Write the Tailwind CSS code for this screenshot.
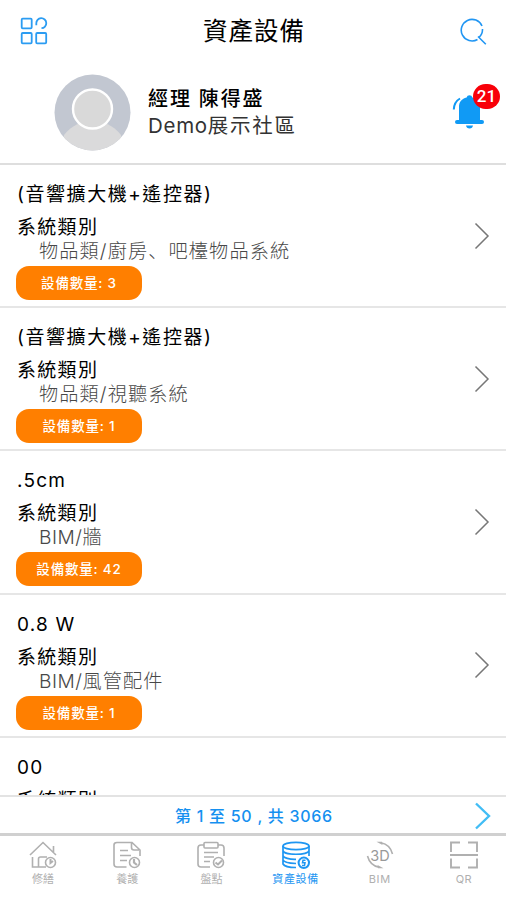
<!DOCTYPE html>
<html lang="zh-Hant">
<head>
<meta charset="utf-8">
<title>資產設備</title>
<script src="https://cdn.jsdelivr.net/npm/@tailwindcss/browser@4"></script>
</head>
<body class="bg-white">
<div class="w-[506px] h-[900px] overflow-hidden flex flex-col bg-white text-black font-['Inter','Noto_Sans_CJK_TC',sans-serif]">
  <header class="h-[165px] shrink-0 border-b-2 border-[#dedede]">
    <div class="h-[62px] flex items-center justify-between pl-5 pr-[18px]">
      <svg class="w-7 h-7" viewBox="0 0 28 28" fill="none" stroke="#2b9cf2" stroke-width="1.8"><rect x="1.7" y="1.7" width="10" height="9.6" rx="1"/><rect x="1.7" y="16" width="10" height="10.3" rx="1"/><rect x="16.2" y="16" width="10" height="10.3" rx="1"/><path d="M16.3 8.2V6.5A5 5 0 1 1 21.5 11.2"/></svg>
      <h1 class="text-[24.5px] leading-8 tracking-[1px] -mt-[2px] font-['Noto_Sans_CJK_TC',sans-serif]">資產設備</h1>
      <svg class="w-7 h-7" viewBox="0 0 28 28" fill="none" stroke="#2196f3" stroke-width="1.6"><path d="M22 9A10.800 10.800 0 1 0 17.500 22.500M22.500 12A10.800 10.800 0 0 1 19 20.300M18 19.500 25.800 27.200"/></svg>
    </div>
    <div class="h-[101px] flex pl-[54px] pr-[10px]">
      <svg class="w-[77px] h-[77px] mt-3 shrink-0" viewBox="0 0 77 77"><defs><clipPath id="c"><circle cx="38.5" cy="38.5" r="38"/></clipPath></defs><g clip-path="url(#c)"><rect width="77" height="77" fill="#c2c7d1"/><path d="M10 61C18 51 28 47 38.500 47S59 51 67 61V77H10Z" fill="#dadadb"/></g><circle cx="38.5" cy="35" r="19.5" fill="#d9d9d9" stroke="#fff" stroke-width="2.4"/></svg>
      <div class="ml-[17px] mt-6 grow">
        <div class="h-[26px] leading-[27px] text-[20px] tracking-[1.900px] font-medium"><span>經理</span><span class="inline-block w-[7px]"></span><span>陳得盛</span></div>
        <div class="h-[27px] leading-[27px] text-[20.500px] text-[#333]"><span class="tracking-[0.700px]">Demo</span><span class="tracking-[1.700px]">展示社區</span></div>
      </div>
      <div class="relative w-[50px] h-[50px] mt-[20px]">
        <svg class="w-[50px] h-[50px]" viewBox="0 0 50 50" fill="#109af5"><path d="M20.600 15.500a3 3 0 0 1 5.800 0C31.200 16.500 34 20 34 25V38H13V25C13 20 15.800 16.500 20.600 15.500Z"/><rect x="9" y="38" width="29" height="4" rx="2"/><path d="M20 43.500H27Q26.500 46.500 23.500 46.500T20 43.500Z"/><path d="M7.800 27.500Q8 20 14 16.500" fill="none" stroke="#109af5" stroke-width="2"/></svg>
        <span class="absolute left-[27px] top-[2px] w-[27px] h-[25px] rounded-full bg-[#f80009] text-white text-[17px] leading-[25px] text-center font-medium font-['Roboto',sans-serif]">21</span>
      </div>
    </div>
  </header>
  <main id="list" class="h-[630px] shrink-0 overflow-hidden"></main>
  <div class="h-[41px] shrink-0 border-t-2 border-[#e3e3e3] flex items-center pl-[175px] pr-[15px] pb-[2px] justify-between text-[#1590f0]">
    <span class="text-[16px] leading-5 tracking-[0.720px] font-medium whitespace-nowrap">第 1 至 50 , 共 3066</span>
    <svg class="w-4 h-7" viewBox="0 0 16 28" fill="none" stroke="#42bdf5" stroke-width="2.400"><path d="M1 1.500 14 14 1 26.500"/></svg>
  </div>
  <nav class="h-[67px] shrink-0 border-t-[3px] border-[#d0d0d0] -mt-[3px] grid grid-cols-6 text-[#b0b0b0] text-[11px] leading-4 pt-[5px] pl-px text-center">
    <div class="flex flex-col items-center gap-[2px]"><svg class="w-7 h-7" viewBox="0 0 28 28" fill="none" stroke="currentColor" stroke-width="1.6"><path d="M1 14 14 1.500 27 14M24.500 5V11M3.500 16V26H9.500V18Q9.500 16 11.500 16H18M9.500 26H17"/><circle cx="21.500" cy="21.500" r="5"/><path d="M21.500 18V22L24 20" stroke-width="2"/></svg><span>修繕</span></div>
    <div class="flex flex-col items-center gap-[2px]"><svg class="w-7 h-7" viewBox="0 0 28 28" fill="none" stroke="currentColor" stroke-width="1.600"><path d="M13.500 26H4Q1 26 1 23V4Q1 1.500 4 1.500H19L27 9V15M18.500 2V6.500Q18.500 9 21 9H26M7 9.500H15M7 14.500H18M7 19.500H14"/><circle cx="21.500" cy="21.500" r="5"/><path d="M21 18V21.500L24 24" stroke-width="2.200"/></svg><span>養護</span></div>
    <div class="flex flex-col items-center gap-[2px]"><svg class="w-7 h-7" viewBox="0 0 28 28" fill="none" stroke="currentColor" stroke-width="1.600"><path d="M13 26H4Q1 26 1 23V7Q1 4 4 4H7M21 4H24Q27 4 27 7V15M7 11.500H21M7 16H17M7 20.500H13"/><rect x="7" y="1.500" width="14" height="5.500" rx="1"/><circle cx="21.500" cy="21.500" r="5"/><path d="M18.500 21.500 21 23.500 25 19.500" stroke-width="2"/></svg><span>盤點</span></div>
    <div class="flex flex-col items-center gap-[2px] text-[#1e96f2]"><svg class="w-7 h-7" viewBox="0 0 28 28" fill="none" stroke="currentColor" stroke-width="1.700"><ellipse cx="14" cy="5" rx="13" ry="3.700"/><path d="M1 5V9.500C1 14.500 27 14.500 27 9.500V5M1 9.500V14.500C1 17 8 18.500 14 18.300M27 9.500V15M1 14.500V19Q2 22 14 22.500M1 19V23Q3 26.500 14 26.500"/><circle cx="21.800" cy="21.800" r="5.200" stroke-width="2"/><path d="M23.500 19.200H21L20.500 21.800H23L22.500 24.500H20" stroke-width="1.500"/></svg><span class="tracking-[.6px]">資產設備</span></div>
    <div class="flex flex-col items-center gap-[2px]"><svg class="w-7 h-7" viewBox="0 0 28 28" fill="none" stroke="currentColor" stroke-width="1.600"><path d="M15 1.800Q24 3.500 26.500 13M1.500 15Q4 24.500 13 26.200"/><path d="M10.500 .8 16 .8 16.500 4ZM17.500 27.200 12 27.200 11.500 24Z" fill="currentColor" stroke="none"/><text x="14" y="19.500" text-anchor="middle" font-size="14.500" fill="#999" stroke="none" font-family="Inter">3D</text></svg><span class="tracking-[.6px]">BIM</span></div>
    <div class="flex flex-col items-center gap-[2px]"><svg class="w-7 h-7" viewBox="0 0 28 28" fill="none" stroke="currentColor" stroke-width="1.900"><path d="M1 11V1.500H10M18 1.500H27V11M1 17.500V26.500H10M18 26.500H27V17.500M0 14H28"/></svg><span class="tracking-[.3px]">QR</span></div>
  </nav>
</div>
<template id="row">
  <article class="h-[143.200px] border-b-2 border-[#e6e6e6] flex items-center justify-between pl-4 pr-[16px]">
    <div class="h-full pt-4">
      <h2 data-t class="h-[33px] leading-[27px] pl-px text-[19px] whitespace-pre"></h2>
      <p class="h-[24px] leading-[27px] pl-px text-[19px] tracking-[1.300px]">系統類別</p>
      <p data-s class="h-[28px] leading-[27px] pl-[23px] text-[19.200px] tracking-[1.100px] text-[#484848] font-light whitespace-pre"></p>
      <div data-n class="w-[126px] h-[34px] rounded-[13px] bg-[#ff7f00] text-white text-[13.500px] leading-[34px] tracking-[0.800px] font-medium text-center"></div>
    </div>
    <svg class="w-4 h-7" viewBox="0 0 16 28" fill="none" stroke="#777" stroke-width="1.500"><path d="M1.500 1.500 14 14 1.500 26.500"/></svg>
  </article>
</template>
<script>
const rows = [
  ["(音響擴大機+遙控器)", "物品類/廚房<span lang='zh-Hans' class=\"font-['Noto_Sans_CJK_SC']\">、</span>吧檯物品系統", 3],
  ["(音響擴大機+遙控器)", "物品類/視聽系統", 1],
  [".5cm", "<span class='tracking-[.5px]'>BIM/</span>牆", 42],
  ["0.8 W", "<span class='tracking-[.5px]'>BIM/</span>風管配件", 1],
  ["00", "", 1]
];
const tpl = document.getElementById("row"), list = document.getElementById("list");
for (const [t, s, n] of rows) {
  const r = tpl.content.cloneNode(true);
  const title = r.querySelector("[data-t]");
  title.textContent = t;
  title.classList.add(t.startsWith("(") ? "tracking-[1.550px]" : "tracking-[1.200px]");
  r.querySelector("[data-s]").innerHTML = s;
  r.querySelector("[data-n]").textContent = "設備數量: " + n;
  list.append(r);
}
</script>
</body>
</html>
